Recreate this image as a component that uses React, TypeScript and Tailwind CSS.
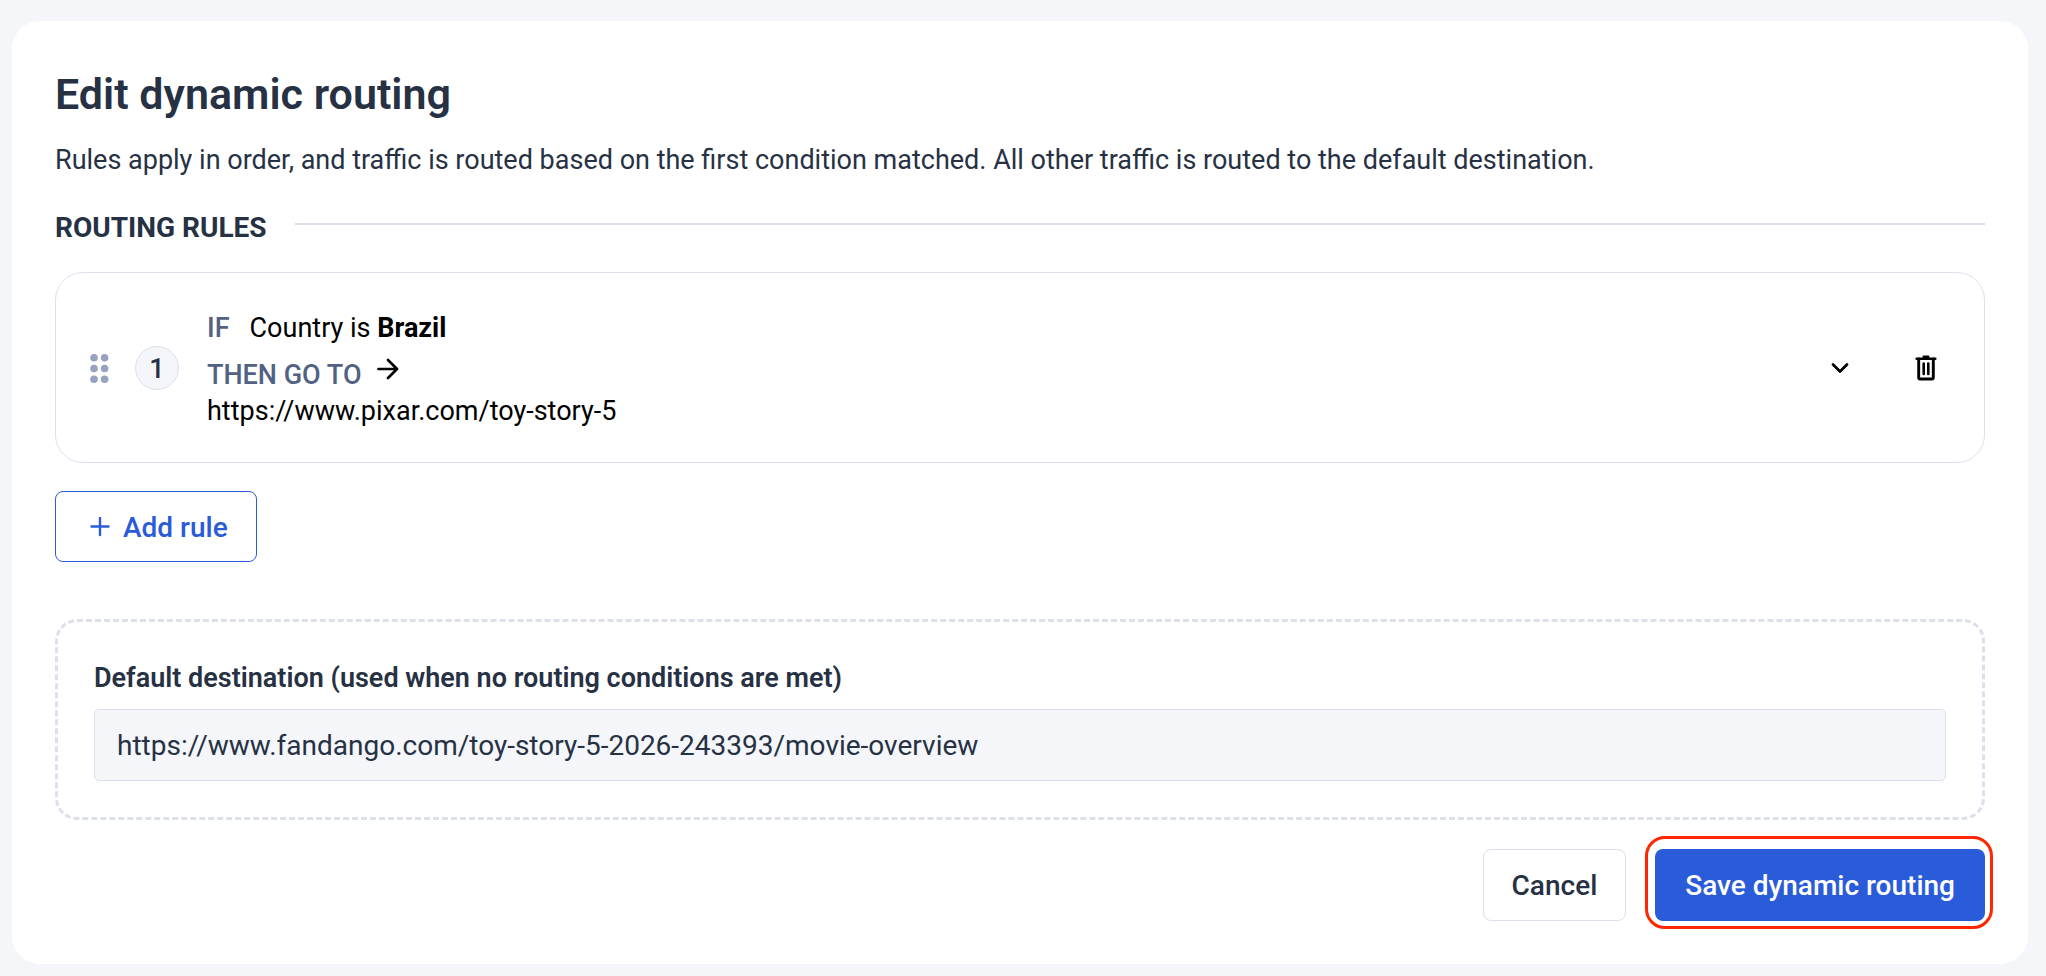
import { useState } from "react";

function DragHandleIcon() {
  return (
    <svg aria-hidden="true" className="h-[29px] w-[19px]" fill="#96a2c0" viewBox="0 0 19 29">
      {[4, 14.6].map((cx) =>
        [3.8, 14.5, 25.2].map((cy) => <circle cx={cx} cy={cy} key={`${cx}-${cy}`} r="3.8" />)
      )}
    </svg>
  );
}

function ArrowIcon() {
  return (
    <svg
      aria-hidden="true"
      className="size-6"
      fill="none"
      stroke="currentColor"
      strokeLinecap="round"
      strokeLinejoin="round"
      strokeWidth="2.7"
      viewBox="0 0 24 24"
    >
      <path d="M2.5 12h18.5M12 3l9 9-9 9" />
    </svg>
  );
}

function PlusIcon() {
  return (
    <svg
      aria-hidden="true"
      className="size-5"
      fill="none"
      stroke="currentColor"
      strokeLinecap="round"
      strokeWidth="2.4"
      viewBox="0 0 20 20"
    >
      <path d="M10 1v17M1.5 9.5h17" />
    </svg>
  );
}

function ChevronIcon() {
  return (
    <svg
      aria-hidden="true"
      className="size-6"
      fill="none"
      stroke="currentColor"
      strokeLinecap="round"
      strokeLinejoin="round"
      strokeWidth="2.8"
      viewBox="0 0 24 24"
    >
      <path d="M5 8.5l7 7 7-7" />
    </svg>
  );
}

function TrashIcon() {
  return (
    <svg
      aria-hidden="true"
      className="h-[26px] w-[22px]"
      fill="none"
      stroke="currentColor"
      strokeLinecap="round"
      strokeLinejoin="round"
      viewBox="0 0 22 26"
    >
      <path d="M1.7 3.7h18.6M8.8 1.9h4.4" strokeWidth="2.6" />
      <path d="M3.7 4v18.6q0 1.4 1.4 1.4h11.8q1.4 0 1.4-1.4V4" strokeWidth="2.9" />
      <path d="M8.7 8.6v10.4M13.3 8.6v10.4" strokeWidth="2.6" />
    </svg>
  );
}

type Rule = { id: number; country: string; url: string };

function RuleCard({ rule, position, onDelete }: { rule: Rule; position: number; onDelete: () => void }) {
  return (
    <li className="flex items-center rounded-[28px] border border-[#dce0ec] pt-[35px] pr-[38px] pb-[34px] pl-[34px]">
      <button aria-label="Reorder rule" className="mr-[26px] cursor-grab" type="button">
        <DragHandleIcon />
      </button>
      <span className="mr-7 flex size-11 items-center justify-center rounded-full border border-[#dce0ec] bg-[#f4f6fa] pt-0.5 font-medium text-[#273144] text-[27px]">
        {position}
      </span>
      <div className="text-[27px] text-black leading-[34px]">
        <p className="mb-[9px] flex gap-5 leading-10">
          <span className="font-medium text-[#526282]">IF</span>
          <span>
            Country is <strong className="font-bold">{rule.country}</strong>
          </span>
        </p>
        <p className="flex items-start gap-[14px] leading-[37px]">
          <span className="font-medium text-[#526282]">THEN GO TO</span>
          <ArrowIcon />
        </p>
        <p>{rule.url}</p>
      </div>
      <div className="ml-auto flex gap-[46px] text-black">
        <button aria-label="Expand rule" className="flex size-10 items-center justify-center" type="button">
          <ChevronIcon />
        </button>
        <button
          aria-label="Delete rule"
          className="flex size-10 items-center justify-center"
          onClick={onDelete}
          type="button"
        >
          <TrashIcon />
        </button>
      </div>
    </li>
  );
}

export default function App() {
  const [rules, setRules] = useState<Rule[]>([
    { id: 1, country: "Brazil", url: "https://www.pixar.com/toy-story-5" },
  ]);
  const [destination, setDestination] = useState(
    "https://www.fandango.com/toy-story-5-2026-243393/movie-overview"
  );

  return (
    <main className="min-h-screen bg-[#f4f6fa] pt-[21px] pr-[18px] pb-3 pl-3 font-['Roboto',sans-serif] text-[#273144]">
      <form className="rounded-[28px] bg-white px-[43px] pt-[45px] pb-[43px]" onSubmit={(e) => e.preventDefault()}>
        <h1 className="font-semibold text-[43px] leading-[56px]">Edit dynamic routing</h1>
        <p className="mt-[18px] text-[27px] leading-10">
          Rules apply in order, and traffic is routed based on the first condition matched. All other traffic is
          routed to the default destination.
        </p>

        <div className="mt-7 flex items-start gap-7">
          <h2 className="font-bold text-[28px] leading-10">ROUTING RULES</h2>
          <div className="mt-[15px] h-[2px] flex-1 bg-[#dce0ec]" />
        </div>

        <ul className="mt-6 space-y-4">
          {rules.map((rule, index) => (
            <RuleCard
              key={rule.id}
              onDelete={() => setRules(rules.filter((r) => r.id !== rule.id))}
              position={index + 1}
              rule={rule}
            />
          ))}
        </ul>

        <button
          className="mt-7 flex h-[71px] items-center gap-[13px] rounded-lg border border-[#2a5bd9] pr-7 pl-[34px] font-medium text-[#2a5bd9] text-[28px]"
          onClick={() => setRules([...rules, { id: Date.now(), country: "Brazil", url: "https://" }])}
          type="button"
        >
          <PlusIcon />
          <span className="pt-0.5">Add rule</span>
        </button>

        <div className="mt-[57px] rounded-[22px] border-[#dce0ec] border-[3px] border-dashed px-9 pt-[38px] pb-9">
          <label className="block font-semibold text-[27px] leading-9" htmlFor="default-destination">
            Default destination (used when no routing conditions are met)
          </label>
          <input
            className="mt-[13px] block h-[72px] w-full rounded-[5px] border border-[#dce0ec] bg-[#f4f6fa] px-[22px] text-[28px]"
            id="default-destination"
            onChange={(e) => setDestination(e.target.value)}
            type="text"
            value={destination}
          />
        </div>

        <div className="mt-[29px] flex justify-end gap-[29px]">
          <button className="h-[72px] rounded-lg border border-[#dce0ec] px-7 pt-0.5 font-medium text-[28px]" type="button">
            Cancel
          </button>
          <div className="relative">
            <button className="h-[72px] rounded-lg bg-[#2a5bd9] px-[30px] pt-0.5 font-medium text-[28px] text-white" type="submit">
              Save dynamic routing
            </button>
            <span className="-top-[13px] -right-2 -bottom-2 -left-[10px] pointer-events-none absolute rounded-[20px] border-[#ff2600] border-[3px]" />
          </div>
        </div>
      </form>
    </main>
  );
}
